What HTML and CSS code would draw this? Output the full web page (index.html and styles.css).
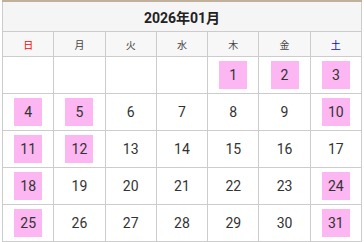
FILE: index.html
```html
<!DOCTYPE html>
<html lang="ja">
<head>
<meta charset="utf-8">
<link rel="stylesheet" href="styles.css">
</head>
<body>
<table class="cal">
  <thead>
    <tr><th class="title" colspan="7">2026年01月</th></tr>
    <tr class="wd">
      <th class="sun">日</th><th>月</th><th>火</th><th>水</th><th>木</th><th>金</th><th class="sat">土</th>
    </tr>
  </thead>
  <tbody>
    <tr><td></td><td></td><td></td><td></td><td><span class="d hl">1</span></td><td><span class="d hl">2</span></td><td><span class="d hl">3</span></td></tr>
    <tr><td><span class="d hl">4</span></td><td><span class="d hl">5</span></td><td><span class="d">6</span></td><td><span class="d">7</span></td><td><span class="d">8</span></td><td><span class="d">9</span></td><td><span class="d hl">10</span></td></tr>
    <tr><td><span class="d hl">11</span></td><td><span class="d hl">12</span></td><td><span class="d">13</span></td><td><span class="d">14</span></td><td><span class="d">15</span></td><td><span class="d">16</span></td><td><span class="d">17</span></td></tr>
    <tr><td><span class="d hl">18</span></td><td><span class="d">19</span></td><td><span class="d">20</span></td><td><span class="d">21</span></td><td><span class="d">22</span></td><td><span class="d">23</span></td><td><span class="d hl">24</span></td></tr>
    <tr><td><span class="d hl">25</span></td><td><span class="d">26</span></td><td><span class="d">27</span></td><td><span class="d">28</span></td><td><span class="d">29</span></td><td><span class="d">30</span></td><td><span class="d hl">31</span></td></tr>
  </tbody>
</table>
</body>
</html>
```
FILE: styles.css
```css
html, body {
  margin: 0;
  padding: 0;
  background: #ffffff;
}
body {
  padding: 0 2px;
  font-family: Roboto, "Noto Sans CJK JP", sans-serif;
  color: #333333;
}
.cal {
  width: 360px;
  border-collapse: collapse;
  table-layout: fixed;
  border-top: 2px solid #c0b09c;
}
.cal th, .cal td {
  border: 1px solid #cccccc;
  padding: 0;
  text-align: center;
}
.title {
  height: 29px;
  background: #f5f5f5;
  font-size: 14px;
  font-weight: 700;
  color: #222222;
}
.wd th {
  height: 24px;
  background: #f7f7f7;
  font-size: 10px;
  font-weight: 400;
  color: #444444;
}
.wd .sun { color: #ff0000; }
.wd .sat { color: #0000ff; }
.cal td {
  height: 36px;
}
.d {
  display: inline-flex;
  align-items: center;
  justify-content: center;
  width: 28px;
  height: 28px;
  font-size: 14px;
  color: #333333;
  vertical-align: middle;
}
.d.hl {
  background: #fcb6f1;
}
```
